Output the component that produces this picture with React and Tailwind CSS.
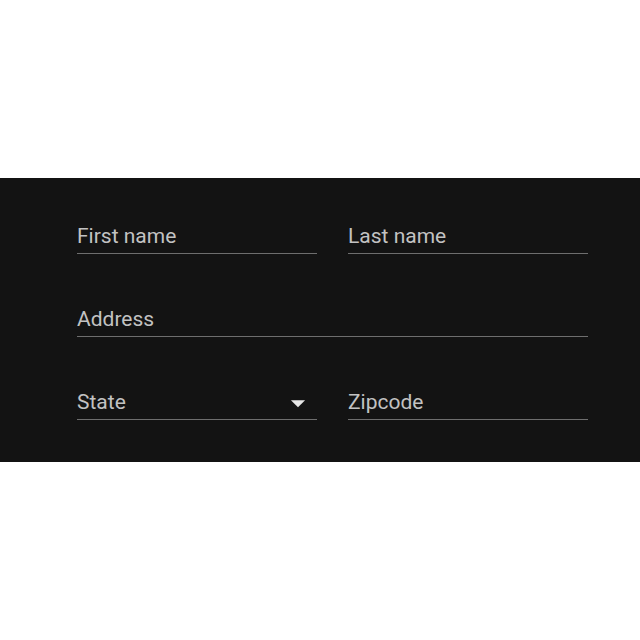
const Field = ({ label, select }) => (
  <div className="relative flex items-center border-b border-[#6e6e6e] pt-[1px] pb-[4px]">
    <span className="text-[21px] leading-[25px] text-[#c2c2c2]">{label}</span>
    {select && (
      <svg
        viewBox="0 0 24 24"
        className="absolute right-[2px] top-[-3px] w-[34px] h-[34px]"
        fill="#e6e6e6"
      >
        <path d="M7 10l5 5 5-5z" />
      </svg>
    )}
  </div>
)

export default function App() {
  return (
    <div className="h-screen bg-white pt-[178px]" style={{ fontFamily: 'Roboto, "Noto Sans", sans-serif' }}>
      <div className="bg-[#131313] pl-[77px] pr-[52px] pt-[45px] pb-[42px] flex flex-col gap-[52px]">
        <div className="grid grid-cols-2 gap-[31px]">
          <Field label="First name" />
          <Field label="Last name" />
        </div>
        <Field label="Address" />
        <div className="grid grid-cols-2 gap-[31px]">
          <Field label="State" select />
          <Field label="Zipcode" />
        </div>
      </div>
    </div>
  )
}
